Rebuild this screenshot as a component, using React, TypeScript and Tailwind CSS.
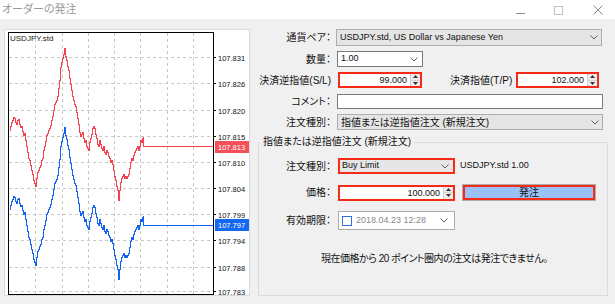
import React from "react";

// ask/bid tick path, absolute page coords of the red line
const ask: number[][] = [
  [9, 130], [10, 126], [11, 122], [12, 120], [13, 117], [14, 118], [15, 122], [16, 124], [17, 120], [18, 119],
  [19, 124], [20, 127], [21, 126], [22, 131], [23, 135], [24, 133], [25, 140], [26, 146], [27, 152], [28, 158],
  [29, 160], [30, 165], [31, 170], [32, 174], [33, 180], [34, 183], [35, 186], [36, 178], [37, 172], [38, 170],
  [39, 167], [40, 165], [41, 160], [42, 158], [43, 150], [44, 146], [45, 141], [46, 135], [47, 133], [48, 130],
  [49, 128], [50, 125], [51, 120], [52, 116], [53, 110], [54, 104], [55, 102], [56, 100], [57, 96], [58, 88],
  [59, 80], [60, 67], [61, 62], [62, 58], [63, 54], [64, 48], [65, 56], [66, 60], [67, 66], [68, 70],
  [69, 78], [70, 84], [71, 90], [72, 96], [73, 100], [74, 104], [75, 106], [76, 112], [77, 118], [78, 124],
  [79, 132], [80, 136], [81, 134], [82, 132], [83, 138], [84, 142], [85, 140], [86, 146], [87, 148], [88, 150],
  [89, 142], [90, 138], [91, 134], [92, 128], [93, 126], [94, 128], [95, 134], [96, 138], [97, 144], [98, 146],
  [99, 140], [100, 144], [101, 148], [102, 150], [103, 146], [104, 152], [105, 154], [106, 150], [107, 152], [108, 156],
  [109, 158], [110, 162], [111, 160], [112, 164], [113, 170], [114, 176], [115, 180], [116, 186], [117, 190], [118, 200],
  [119, 190], [120, 182], [121, 178], [122, 176], [123, 174], [124, 178], [125, 176], [126, 178], [127, 176], [128, 174],
  [129, 168], [130, 162], [131, 158], [132, 160], [133, 155], [134, 152], [135, 150], [136, 148], [137, 146], [138, 150],
  [139, 146], [140, 140], [141, 142], [142, 138], [143, 136], [143, 146], [213, 146],
];

const stepPath = (pts: number[][], dy: number) => {
  let d = `M${pts[0][0] - 4.5} ${pts[0][1] + dy - 29.5}`;
  for (let i = 1; i < pts.length; i++) {
    d += ` H${pts[i][0] - 4.5} V${pts[i][1] + dy - 29.5}`;
  }
  return d;
};

const levels = [
  { y: 57, v: "107.831" },
  { y: 83, v: "107.826" },
  { y: 110, v: "107.820" },
  { y: 136, v: "107.815" },
  { y: 162, v: "107.810" },
  { y: 188, v: "107.804" },
  { y: 214, v: "107.799" },
  { y: 240, v: "107.794" },
  { y: 267, v: "107.788" },
  { y: 291, v: "107.783" },
];
const cols = [35, 62, 88, 114, 140, 167, 193];

const Chart = () => (
  <div className="w-[246px] h-[267px] border border-[#dadada] bg-white">
    <svg width="244" height="265" className="block font-['Liberation_Sans',sans-serif]">
      {levels.map((l) => (
        <line key={l.v} x1="4" x2="208" y1={l.y - 29.5} y2={l.y - 29.5} stroke="#c8c8c8" strokeDasharray="3 3" />
      ))}
      {cols.map((c) => (
        <line key={c} x1={c - 4.5} x2={c - 4.5} y1="3" y2="264" stroke="#c8c8c8" strokeDasharray="3 3" />
      ))}
      <path d={stepPath(ask, 0)} fill="none" stroke="#f5424f" strokeWidth="1" shapeRendering="crispEdges" />
      <path d={stepPath(ask, 79)} fill="none" stroke="#1062f0" strokeWidth="1" shapeRendering="crispEdges" />
      <rect x="3.5" y="2.5" width="205" height="262" fill="none" stroke="#000" />
      <text x="5" y="11" fontSize="8" fill="#1a1a1a">USDJPY.std</text>
      {levels.map((l) => (
        <g key={l.v}>
          <line x1="208" x2="211" y1={l.y - 29.5} y2={l.y - 29.5} stroke="#000" />
          <text x="213" y={l.y - 26.5} fontSize="7.5" fill="#111">{l.v}</text>
        </g>
      ))}
      <rect x="210" y="111" width="34" height="12" fill="#f5505a" />
      <text x="213" y="120" fontSize="7.5" fill="#fff">107.813</text>
      <rect x="210" y="189" width="34" height="12" fill="#1468f2" />
      <text x="213" y="198" fontSize="7.5" fill="#fff">107.797</text>
    </svg>
  </div>
);

const Chevron = () => (
  <svg width="8" height="5" viewBox="0 0 8 5" className="shrink-0">
    <path d="M0.5 0.5 L4 4 L7.5 0.5" fill="none" stroke="#606060" strokeWidth="1" />
  </svg>
);

const Spin = () => (
  <div className="flex flex-col w-[10px] h-full border-l border-[#cfcfcf] bg-[#ececec]">
    <div className="flex-1 flex items-center justify-center border-b border-[#d5d5d5]">
      <svg width="5" height="3"><path d="M2.5 0 L5 3 L0 3Z" fill="#333" /></svg>
    </div>
    <div className="flex-1 flex items-center justify-center">
      <svg width="5" height="3"><path d="M0 0 L5 0 L2.5 3Z" fill="#333" /></svg>
    </div>
  </div>
);

const Label = ({ children, w = "w-[76px]" }: any) => (
  <div className={`${w} shrink-0 text-right whitespace-nowrap`}>{children}</div>
);

const NumInput = ({ value, w }: any) => (
  <div className={`${w} h-[16px] flex border-2 border-[#f52b18] bg-white`}>
    <div className="flex-1 text-right pr-[3px] leading-[12px] text-[9px]">{value}</div>
    <Spin />
  </div>
);

export default function App() {
  return (
    <div className="w-[615px] h-[304px] overflow-hidden bg-[#f0f0f0] text-[10px] text-[#111] font-['Liberation_Sans','Noto_Sans_CJK_JP',sans-serif] [font-feature-settings:'palt']">
      <div className="h-[19px] bg-white flex items-center">
        <div className="pl-[2px] text-[11px] text-[#9a9a9a]">オーダーの発注</div>
        <div className="ml-auto flex items-center">
          <svg width="10" height="10" className="mr-[28px]"><line x1="0" x2="9" y1="8.5" y2="8.5" stroke="#8a8a8a" /></svg>
          <svg width="10" height="10" className="mr-[29px]"><rect x="0.5" y="1.5" width="8" height="8" fill="none" stroke="#c0c0c0" /></svg>
          <svg width="10" height="10" className="mr-[12px]"><path d="M0.5 0.5 L9.5 9.5 M9.5 0.5 L0.5 9.5" stroke="#8a8a8a" /></svg>
        </div>
      </div>

      <div className="flex pl-[4px] pt-[10px]">
        <Chart />

        <div className="ml-[5px] w-[356px] flex flex-col">
          <div className="flex items-center h-[17px]">
            <Label>通貨ペア：</Label>
            <div className="ml-[5px] w-[266px] h-full flex items-center border border-[#adadad] bg-[#e5e5e5] px-[3px] text-[9px]">
              <span className="flex-1">USDJPY.std, US Dollar vs Japanese Yen</span>
              <Chevron />
            </div>
          </div>

          <div className="flex items-center h-[16px] mt-[5px]">
            <Label>数量：</Label>
            <div className="ml-[6px] w-[86px] h-full flex items-center border border-[#7a7a7a] bg-white pl-[3px] pr-[4px] text-[9px]">
              <span className="flex-1">1.00</span>
              <Chevron />
            </div>
          </div>

          <div className="flex items-center h-[16px] mt-[5px]">
            <Label>決済逆指値(S/L)</Label>
            <div className="ml-[7px]"><NumInput value="99.000" w="w-[84px]" /></div>
            <div className="ml-[28px] w-[60px] whitespace-nowrap">決済指値(T/P)</div>
            <div className="ml-[6px]"><NumInput value="102.000" w="w-[83px]" /></div>
          </div>

          <div className="flex items-center h-[15px] mt-[6px]">
            <Label>コメント：</Label>
            <div className="ml-[6px] w-[266px] h-full border border-[#7a7a7a] bg-white" />
          </div>

          <div className="flex items-center h-[16px] mt-[5px]">
            <Label>注文種別：</Label>
            <div className="ml-[6px] w-[266px] h-full flex items-center border border-[#adadad] bg-[#e5e5e5] px-[3px]">
              <span className="flex-1">指値または逆指値注文 (新規注文)</span>
              <Chevron />
            </div>
          </div>

          <fieldset className="mt-[5px] ml-[3px] w-[350px] h-[161px] border border-[#dcdcdc]">
            <legend className="ml-[1px] px-[3px] leading-[14px]">指値または逆指値注文 (新規注文)</legend>

            <div className="flex items-center h-[16px] mt-[9px]">
              <Label w="w-[72px]">注文種別：</Label>
              <div className="ml-[7px] w-[117px] h-full flex items-center border-2 border-[#f52b18] bg-[#e6e6e6] pl-[2px] pr-[4px] text-[9px]">
                <span className="flex-1">Buy Limit</span>
                <Chevron />
              </div>
              <div className="ml-[5px] text-[9px]">USDJPY.std 1.00</div>
            </div>

            <div className="flex items-center h-[17px] mt-[10px]">
              <Label w="w-[72px]">価格：</Label>
              <div className="ml-[7px]"><NumInput value="100.000" w="w-[117px]" /></div>
              <div className="ml-[7px] w-[134px] h-full border border-[#adadad]">
                <div className="h-full border-2 border-[#f52b18] bg-[#99c2f7] flex items-center justify-center">発注</div>
              </div>
            </div>

            <div className="flex items-center h-[19px] mt-[10px]">
              <Label w="w-[72px]">有効期限：</Label>
              <div className="ml-[7px] w-[117px] h-full flex items-center border border-[#adadad] bg-white pl-[3px] pr-[6px]">
                <div className="w-[10px] h-[10px] border border-[#2b73d9] bg-white" />
                <span className="ml-[4px] flex-1 text-[9px] text-[#8a8a8a]">2018.04.23 12:28</span>
                <Chevron />
              </div>
            </div>

            <div className="mt-[21px] pl-[62px] tracking-[-0.5px] whitespace-nowrap">現在価格から 20 ポイント圏内の注文は発注できません。</div>
          </fieldset>
        </div>
      </div>
    </div>
  );
}
